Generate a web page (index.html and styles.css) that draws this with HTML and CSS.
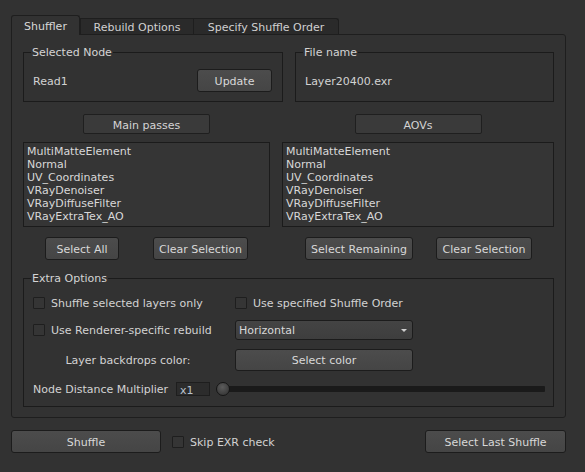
FILE: index.html
```html
<!DOCTYPE html>
<html>
<head>
<meta charset="utf-8">
<title>Shuffler</title>
<link rel="stylesheet" href="styles.css">
</head>
<body>
<div class="app">
  <div class="tabbar">
    <div class="tab active">Shuffler</div>
    <div class="tab inactive t-rebuild">Rebuild Options</div>
    <div class="tab inactive t-order">Specify Shuffle Order</div>
  </div>
  <div class="panel">
    <div class="top-row">
      <fieldset class="group g-node">
        <legend>Selected Node</legend>
        <div class="group-row">
          <span class="val">Read1</span>
          <button class="btn w-update">Update</button>
        </div>
      </fieldset>
      <fieldset class="group g-file">
        <legend>File name</legend>
        <div class="group-row">
          <span class="val">Layer20400.exr</span>
        </div>
      </fieldset>
    </div>

    <div class="lists">
      <div class="col col-main">
        <div class="caption">Main passes</div>
        <ul class="list">
          <li>MultiMatteElement</li>
          <li>Normal</li>
          <li>UV_Coordinates</li>
          <li>VRayDenoiser</li>
          <li>VRayDiffuseFilter</li>
          <li>VRayExtraTex_AO</li>
        </ul>
        <div class="btn-row row-main">
          <button class="btn w-all">Select All</button>
          <button class="btn w-clear1">Clear Selection</button>
        </div>
      </div>
      <div class="col col-aov">
        <div class="caption">AOVs</div>
        <ul class="list">
          <li>MultiMatteElement</li>
          <li>Normal</li>
          <li>UV_Coordinates</li>
          <li>VRayDenoiser</li>
          <li>VRayDiffuseFilter</li>
          <li>VRayExtraTex_AO</li>
        </ul>
        <div class="btn-row row-aov">
          <button class="btn w-remain">Select Remaining</button>
          <button class="btn w-clear2">Clear Selection</button>
        </div>
      </div>
    </div>

    <fieldset class="group g-extra">
      <legend>Extra Options</legend>
      <div class="opt-row r1">
        <label class="check"><span class="box"></span>Shuffle selected layers only</label>
        <label class="check"><span class="box"></span>Use specified Shuffle Order</label>
      </div>
      <div class="opt-row r2">
        <label class="check"><span class="box"></span>Use Renderer-specific rebuild</label>
        <div class="combo"><span class="combo-text">Horizontal</span><span class="arrow"></span></div>
      </div>
      <div class="opt-row r3">
        <span class="center-label">Layer backdrops color:</span>
        <button class="btn w-color">Select color</button>
      </div>
      <div class="dist-row">
        <span class="dist-label">Node Distance Multiplier</span>
        <span class="num">x1</span>
        <div class="slider">
          <div class="track"></div>
          <div class="handle"></div>
        </div>
      </div>
    </fieldset>
  </div>

  <div class="bottom">
    <button class="btn w-shuffle">Shuffle</button>
    <label class="check skip"><span class="box"></span>Skip EXR check</label>
    <button class="btn w-last">Select Last Shuffle</button>
  </div>
</div>
</body>
</html>
```

FILE: styles.css
```css
* { box-sizing: border-box; }
html, body { margin: 0; padding: 0; }
body {
  background: #323232;
  font-family: "DejaVu Sans", Verdana, sans-serif;
  font-size: 11px;
  line-height: 13px;
  color: #d2d2d2;
  width: 585px;
  height: 472px;
  overflow: hidden;
}
.app { padding: 15px 19px 0 11px; }

/* tabs */
.tabbar {
  display: flex;
  align-items: flex-end;
  height: 20px;
  margin-bottom: -1px;
  position: relative;
  z-index: 1;
}
.tab {
  display: flex;
  align-items: center;
  justify-content: center;
  border: 1px solid #1e1e1e;
  border-bottom: none;
}
.tab.active {
  width: 69px;
  height: 20px;
  padding-top: 1px;
  background: #323232;
  border-radius: 3px 3px 0 0;
  color: #d8d8d8;
}
.tab.inactive {
  height: 16px;
  margin-bottom: 1px;
  padding-top: 1px;
  background: #2a2a2a;
  color: #d0d0d0;
}
.t-rebuild { width: 114px; }
.t-order { width: 145px; border-left: none; border-top-right-radius: 3px; }

/* panel */
.panel {
  border: 1px solid #1e1e1e;
  border-radius: 0 3px 3px 3px;
  padding: 11px 11px 10px 11px;
  height: 384px;
}

.group {
  margin: 0;
  padding: 10px 10px 9px 9px;
  border: 1px solid #1b1b1b;
  min-width: 0;
}
.group legend {
  padding: 0 1px;
  margin-left: -2px;
  line-height: 13px;
  color: #d4d4d4;
}

.top-row { display: flex; gap: 12px; }
.g-node { width: 260px; }
.g-file { width: 259px; }
.group-row {
  display: flex;
  align-items: center;
  justify-content: space-between;
  height: 23px;
}
.val { padding-top: 2px; }

.btn {
  font: inherit;
  line-height: 13px;
  color: #d8d8d8;
  background: linear-gradient(#4c4c4c, #454545);
  border: 1px solid #1c1c1c;
  border-radius: 3px;
  height: 23px;
  padding: 1px 0 0;
  display: flex;
  align-items: center;
  justify-content: center;
}
.w-update { width: 75px; }

/* lists */
.lists { display: flex; gap: 12px; margin-top: 12px; }
.col-main { width: 247px; }
.col-aov { width: 272px; }
.caption {
  width: 127px;
  height: 20px;
  margin: 0 auto;
  padding-top: 2px;
  background: #3a3a3a;
  border: 1px solid #1f1f1f;
  border-radius: 2px;
  display: flex;
  align-items: center;
  justify-content: center;
  color: #d4d4d4;
}
.list {
  list-style: none;
  margin: 8px 0 0;
  padding: 2px 3px 0;
  height: 85px;
  background: #353535;
  border: 1px solid #1b1b1b;
  color: #d8d8d8;
}
.btn-row { display: flex; margin-top: 10px; }
.row-main { padding-left: 22px; gap: 34px; }
.row-aov { padding-left: 23px; gap: 23px; }
.w-all { width: 74px; }
.w-clear1 { width: 95px; }
.w-remain { width: 108px; }
.w-clear2 { width: 96px; }

/* extra options */
.g-extra { margin-top: 12px; padding: 8px 8px 10px 9px; }
.opt-row {
  display: grid;
  grid-template-columns: 190px 178px;
  column-gap: 12px;
  align-items: center;
}
.r1 { height: 20px; }
.r2 { height: 20px; margin-top: 7px; }
.r3 { height: 22px; margin-top: 9px; }

.check { display: flex; align-items: center; gap: 6px; white-space: nowrap; }
.box {
  width: 12px;
  height: 12px;
  flex: none;
  margin-bottom: 1px;
  background: #353535;
  border: 1px solid #1e1e1e;
  border-radius: 1px;
}
.check { padding-top: 1px; }

.combo {
  height: 20px;
  display: flex;
  align-items: center;
  justify-content: space-between;
  padding: 1px 5px 0 3px;
  background: linear-gradient(#444444, #3e3e3e);
  border: 1px solid #1c1c1c;
  border-radius: 3px;
  color: #d8d8d8;
}
.arrow {
  width: 0;
  height: 0;
  margin-bottom: 1px;
  border-left: 3px solid transparent;
  border-right: 3px solid transparent;
  border-top: 3px solid #cfcfcf;
}

.center-label { text-align: center; padding-top: 1px; }
.w-color { width: 178px; height: 22px; }

.dist-row {
  display: flex;
  align-items: center;
  height: 14px;
  margin-top: 11px;
}
.dist-label { width: 143px; flex: none; white-space: nowrap; padding-top: 1px; }
.num {
  width: 34px;
  height: 14px;
  flex: none;
  padding-left: 3px;
  padding-top: 2px;
  line-height: 12px;
  background: #2c2c2c;
  border: 1px solid #1e1e1e;
  color: #b9c2cc;
}
.slider {
  position: relative;
  flex: 1;
  height: 14px;
  margin-left: 6px;
  display: flex;
  align-items: center;
}
.track {
  flex: 1;
  height: 6px;
  margin-left: 6px;
  background: #1a1a1a;
  border-radius: 1px;
}
.handle {
  position: absolute;
  left: 0;
  top: 0;
  width: 14px;
  height: 14px;
  border-radius: 50%;
  background: radial-gradient(circle at 45% 35%, #5c5c5c, #3a3a3a 75%);
  border: 1px solid #151515;
}

/* bottom */
.bottom {
  display: flex;
  align-items: center;
  margin-top: 12px;
  height: 23px;
}
.w-shuffle { width: 150px; }
.skip { margin-left: 11px; }
.w-last { width: 141px; margin-left: auto; }
```
